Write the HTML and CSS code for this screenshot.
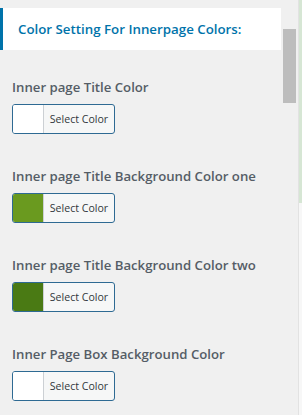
FILE: index.html
```html
<!DOCTYPE html>
<html lang="en">

<head>
    <meta charset="UTF-8">
    <meta name="viewport" content="width=device-width, initial-scale=1.0">
    <title>Innerpage Colors</title>
    <link rel="stylesheet" href="styles.css">
</head>

<body>

    <div class="frame">
        <div class="panel">
            <h3 class="section-title">Color Setting For Innerpage Colors:</h3>

            <div class="control">
                <span class="control-label">Inner page Title Color</span>
                <button class="color-btn" type="button">
                    <span class="swatch swatch-white"></span>
                    <span class="btn-text">Select Color</span>
                </button>
            </div>

            <div class="control">
                <span class="control-label">Inner page Title Background Color one</span>
                <button class="color-btn" type="button">
                    <span class="swatch swatch-green"></span>
                    <span class="btn-text">Select Color</span>
                </button>
            </div>

            <div class="control">
                <span class="control-label">Inner page Title Background Color two</span>
                <button class="color-btn" type="button">
                    <span class="swatch swatch-dark"></span>
                    <span class="btn-text">Select Color</span>
                </button>
            </div>

            <div class="control">
                <span class="control-label">Inner Page Box Background Color</span>
                <button class="color-btn" type="button">
                    <span class="swatch swatch-white"></span>
                    <span class="btn-text">Select Color</span>
                </button>
            </div>
        </div>

        <div class="scrollbar">
            <div class="thumb"></div>
        </div>

        <div class="edge">
            <div class="edge-green"></div>
        </div>
    </div>

</body>

</html>
```

FILE: styles.css
```css
body {
    font-family: "Open Sans", sans-serif;
    margin: 0;
    padding: 0;
    background-color: #f0f0f0;
}

.frame {
    display: flex;
    height: 415px;
    overflow: hidden;
}

.panel {
    width: 282px;
    padding-top: 8px;
}

.section-title {
    margin: 0 0 28px 0;
    height: 42px;
    box-sizing: border-box;
    padding: 12px 0 0 15px;
    background-color: #fff;
    border-left: 3px solid #0073aa;
    color: #0073aa;
    font-size: 13.3px;
    font-weight: 600;
    line-height: 18px;
}

.control {
    padding-left: 12px;
    margin-bottom: 33px;
}

.control-label {
    display: block;
    color: #555d66;
    font-size: 13.2px;
    font-weight: 600;
    line-height: 18px;
    margin-bottom: 8px;
}

.color-btn {
    display: flex;
    width: 103px;
    height: 30px;
    padding: 0;
    border: 1px solid #2e6a93;
    border-radius: 3px;
    background-color: #f6f7f7;
    overflow: hidden;
    cursor: pointer;
}

.swatch {
    width: 30px;
    height: 100%;
    border-right: 1px solid #ccd0d4;
}

.swatch-white {
    background-color: #fff;
}

.swatch-green {
    background-color: #6a9a1f;
}

.swatch-dark {
    background-color: #4a7a14;
}

.btn-text {
    flex: 1;
    align-self: center;
    text-align: center;
    color: #32373c;
    font-family: "Open Sans", sans-serif;
    font-size: 10.6px;
    line-height: 14px;
}

.scrollbar {
    width: 17px;
    padding-top: 29px;
    padding-left: 2px;
    box-sizing: border-box;
}

.thumb {
    width: 13px;
    height: 74px;
    background-color: #bdbdbd;
}

.edge {
    width: 3px;
    border-left: 1px solid #e2e2e2;
    background-color: #f7f7f7;
}

.edge-green {
    height: 203px;
    background-color: #d6e6d4;
}
```
